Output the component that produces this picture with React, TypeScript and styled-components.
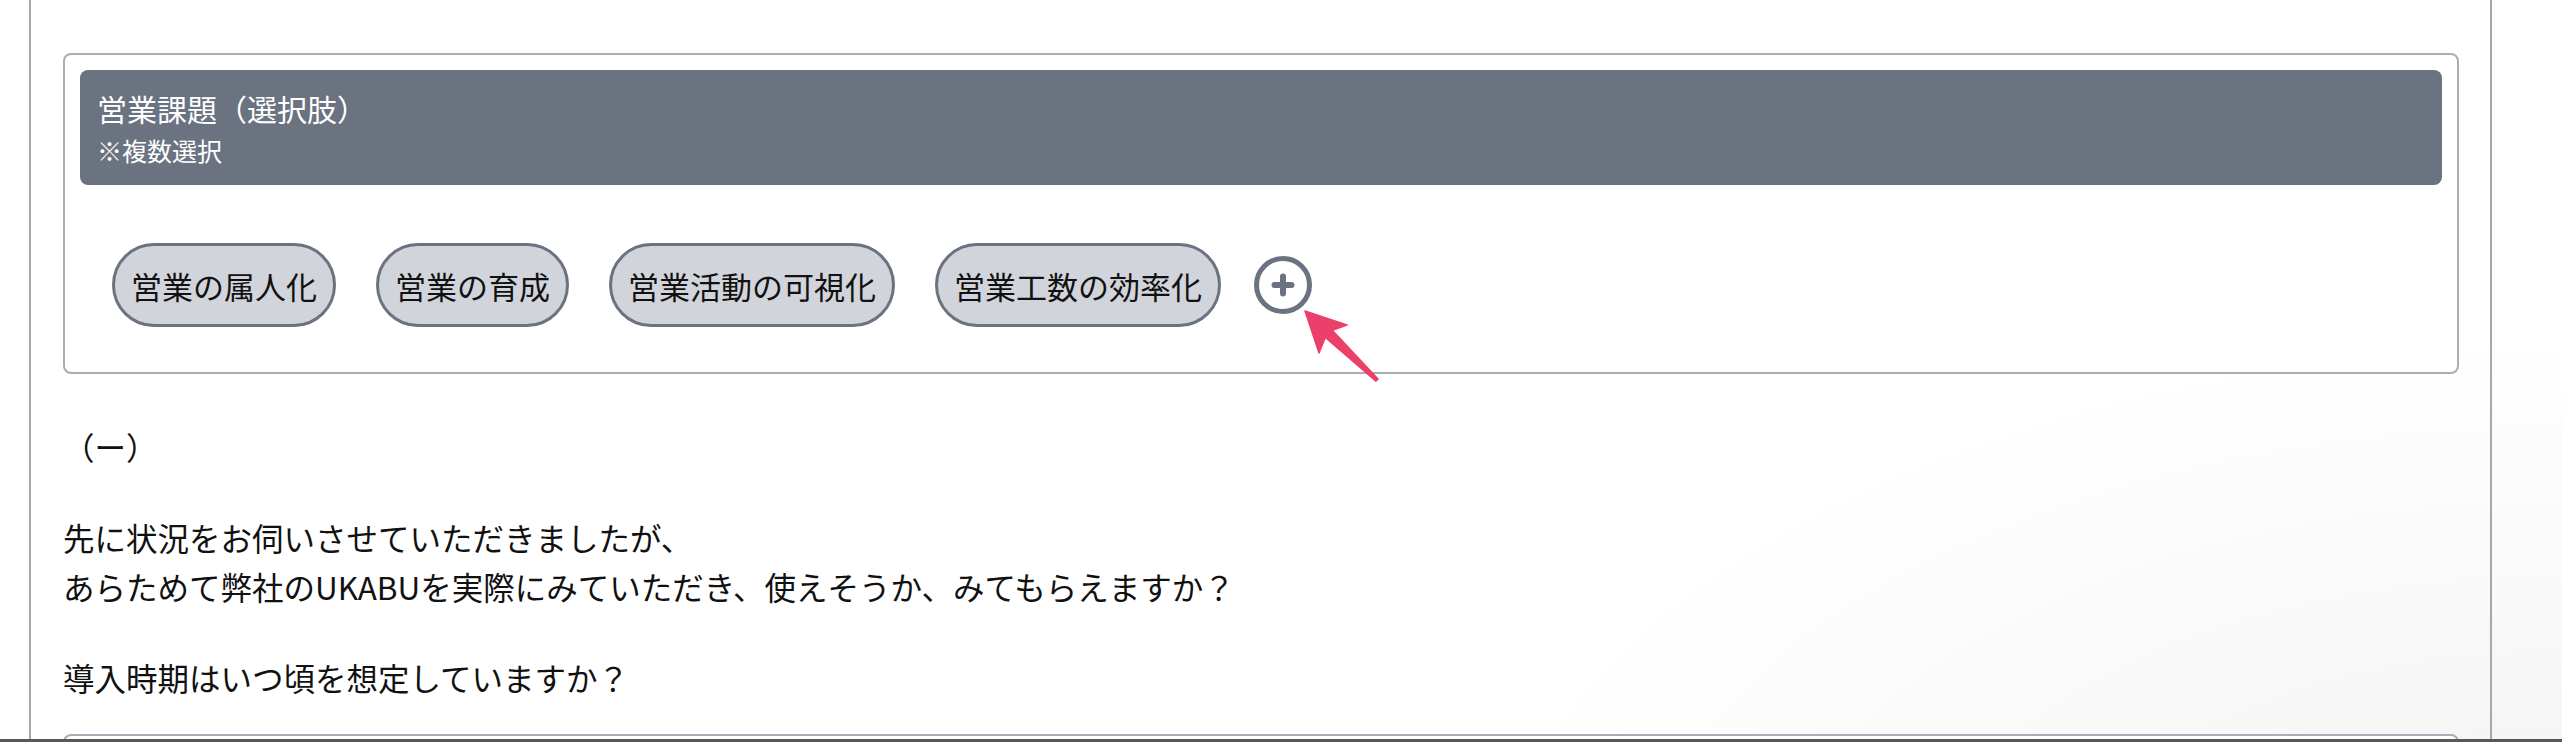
import * as React from 'react';
import styled, { createGlobalStyle } from 'styled-components';

const GlobalStyle = createGlobalStyle`
    html, body {
        margin: 0;
        padding: 0;
        overflow: hidden;
    }
    body {
        font-family: 'Noto Sans CJK JP', 'Noto Sans', sans-serif;
        color: #111;
        background: radial-gradient(ellipse 1100px 600px at 100% 100%, #f1f1f1 0%, #ffffff 100%);
        min-height: 100vh;
    }
`;

const Page = styled.div`
    padding-left: 29px;
    min-height: 100vh;
`;

const Panel = styled.div`
    box-sizing: border-box;
    width: 2463px;
    min-height: 100vh;
    border-left: 2px solid #a4a8b1;
    border-right: 2px solid #a4a8b1;
    padding: 53px 31px 0 32px;
`;

const Card = styled.section`
    background: #fff;
    border: 2px solid #a9adb7;
    border-radius: 8px;
    padding: 15px 15px 0 15px;
`;

const CardHeader = styled.div`
    box-sizing: border-box;
    height: 115px;
    padding: 2px 17px 0 17px;
    background: #6b7280;
    border-radius: 8px;
    color: #fff;
    display: flex;
    flex-direction: column;
    justify-content: center;
`;

const Title = styled.div`
    font-size: 30px;
    line-height: 43px;
`;

const Note = styled.div`
    font-size: 25px;
    line-height: 40px;
`;

const ChipRow = styled.div`
    display: flex;
    align-items: center;
    gap: 40px;
    padding: 58px 32px 45px 32px;
`;

const Chip = styled.button`
    box-sizing: border-box;
    height: 84px;
    padding: 0 16px;
    border: 3px solid #6b7280;
    border-radius: 999px;
    background: #d1d5db;
    color: #111;
    font-family: inherit;
    font-size: 31px;
    line-height: 1;
    cursor: pointer;
`;

const AddWrap = styled.div`
    position: relative;
    width: 58px;
    height: 58px;
    margin-left: -7px;
`;

const AddButton = styled.button`
    width: 58px;
    height: 58px;
    padding: 0;
    border: none;
    background: transparent;
    cursor: pointer;
    display: block;
`;

const Pointer = styled.svg`
    position: absolute;
    left: 43px;
    top: 47px;
    width: 90px;
    height: 85px;
    overflow: visible;
    pointer-events: none;
`;

const Body = styled.div`
    padding-top: 48px;
`;

const Para = styled.p`
    margin: 0 0 42px 0;
    font-size: 31.5px;
    line-height: 49px;

    &:last-child {
        margin-bottom: 32px;
    }
`;

const NextCard = styled.section`
    height: 200px;
    background: #fff;
    border: 2px solid #a9adb7;
    border-radius: 8px;
`;

const WindowEdge = styled.div`
    position: fixed;
    left: 0;
    right: 0;
    bottom: 0;
    height: 3px;
    background: #56585c;
`;

const challenges = ['営業の属人化', '営業の育成', '営業活動の可視化', '営業工数の効率化'];

export default function App() {
    return (
        <Page>
            <GlobalStyle />
            <Panel>
                <Card>
                    <CardHeader>
                        <Title>営業課題（選択肢）</Title>
                        <Note>※複数選択</Note>
                    </CardHeader>
                    <ChipRow>
                        {challenges.map((label) => (
                            <Chip key={label}>{label}</Chip>
                        ))}
                        <AddWrap>
                            <AddButton aria-label="追加">
                                <svg width="58" height="58" viewBox="0 0 58 58">
                                    <circle cx="29" cy="29" r="26.5" fill="#fff" stroke="#6b7280" strokeWidth="5" />
                                    <path d="M20.5 29h17M29 20.5v17" stroke="#6b7280" strokeWidth="6" strokeLinecap="round" />
                                </svg>
                            </AddButton>
                            {/* annotation arrow drawn over the page */}
                            <Pointer viewBox="0 0 90 85">
                                <polygon
                                    points="8,8 50,22 35.3,27.2 81,75.9 79,78.1 28.3,34.4 22,50"
                                    fill="#ea4069"
                                    stroke="#ea4069"
                                    strokeWidth="1.5"
                                    strokeLinejoin="round"
                                />
                            </Pointer>
                        </AddWrap>
                    </ChipRow>
                </Card>
                <Body>
                    <Para>（ー）</Para>
                    <Para>
                        先に状況をお伺いさせていただきましたが、
                        <br />
                        あらためて弊社のUKABUを実際にみていただき、使えそうか、みてもらえますか？
                    </Para>
                    <Para>導入時期はいつ頃を想定していますか？</Para>
                </Body>
                <NextCard />
            </Panel>
            <WindowEdge />
        </Page>
    );
}
